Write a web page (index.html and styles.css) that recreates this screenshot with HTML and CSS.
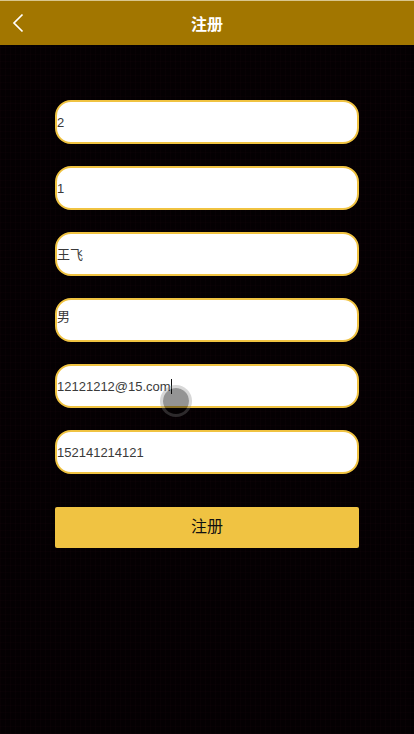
FILE: index.html
```html
<!DOCTYPE html>
<html lang="zh-CN">
<head>
<meta charset="utf-8">
<title>注册</title>
<link rel="stylesheet" href="styles.css">
</head>
<body>
<header class="topbar">
  <svg class="back" width="14" height="22" viewBox="0 0 14 22" aria-hidden="true"><path d="M11.500 1.500 3 10l8.500 8.500" fill="none" stroke="#fff" stroke-width="1.700"/></svg>
  <h1 class="title">注册</h1>
</header>
<main class="form">
  <div class="field">2</div>
  <div class="field">1</div>
  <div class="field field-nudge">王飞</div>
  <div class="field field-high">男</div>
  <div class="field">12121212@15.com<span class="caret"></span><span class="touch"></span></div>
  <div class="field">152141214121</div>
  <button class="submit" type="button">注册</button>
</main>
</body>
</html>
```
FILE: styles.css
```css
* { box-sizing: border-box; }
html, body { margin: 0; height: 100%; }
body {
  width: 414px;
  height: 734px;
  overflow: hidden;
  background:
    repeating-linear-gradient(90deg, rgba(40, 10, 20, 0.12) 0 1px, transparent 1px 5px),
    repeating-linear-gradient(0deg, rgba(40, 10, 20, 0.10) 0 1px, transparent 1px 7px),
    #040002;
  font-family: "Liberation Sans", "Noto Sans CJK SC", sans-serif;
}
.topbar {
  position: relative;
  height: 45px;
  background: #a27600;
  border-top: 1px solid #d8c68e;
  display: flex;
  align-items: center;
  justify-content: center;
}
.back { position: absolute; left: 11px; top: 12px; }
.title { margin: 0; font-size: 16px; font-weight: 700; color: #fff; }
.form {
  padding: 55px 55px 0;
  display: flex;
  flex-direction: column;
  gap: 22px;
}
.field {
  position: relative;
  height: 44px;
  background: #fff;
  border: 2px solid #f0c342;
  border-radius: 16px;
  display: flex;
  align-items: center;
  font-size: 13px;
  color: #3a3a3a;
}
.field-nudge { padding-bottom: 2px; }
.field-high { padding-bottom: 10px; }
.caret {
  width: 1px;
  height: 15px;
  background: #111;
}
.touch {
  position: absolute;
  left: 103px;
  top: 19px;
  width: 32px;
  height: 32px;
  border-radius: 50%;
  background: rgba(0, 0, 0, 0.42);
  border: 3px solid rgba(130, 130, 130, 0.32);
  background-clip: padding-box;
}
.submit {
  height: 41px;
  margin-top: 11px;
  padding: 0 0 5px;
  border: 0;
  border-radius: 2px;
  background: #f0c342;
  color: #111;
  font: 16px "Liberation Sans", "Noto Sans CJK SC", sans-serif;
}
```
